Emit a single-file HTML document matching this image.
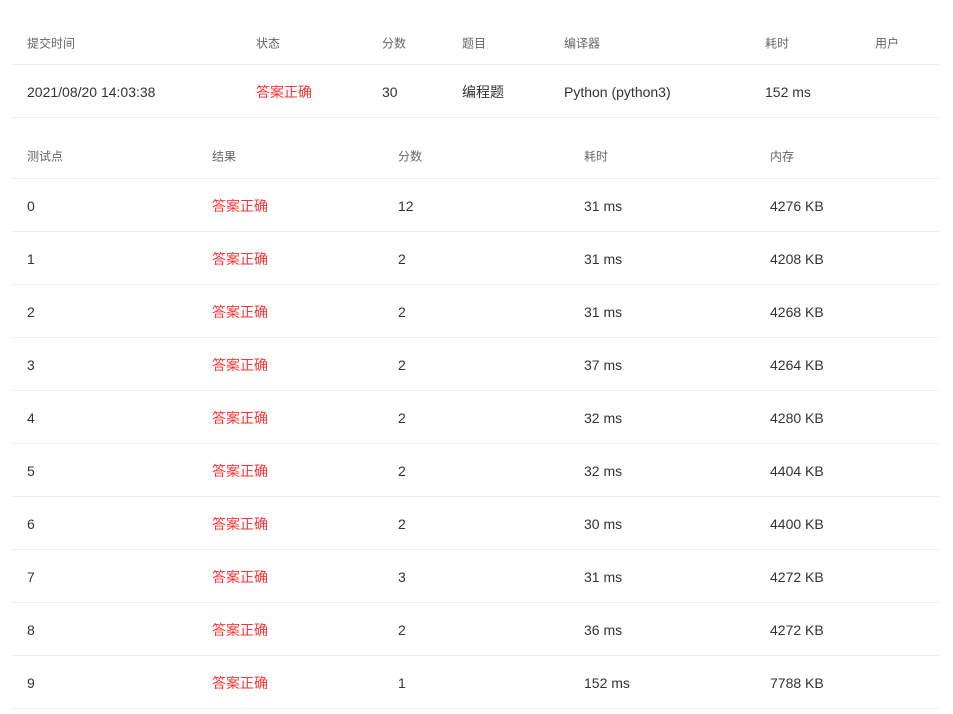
<!DOCTYPE html>
<html><head><meta charset="utf-8"><style>
body{margin:0;background:#fff;font-family:"Liberation Sans","Noto Sans CJK SC",sans-serif;}
.t{position:absolute;left:12px;width:927px;}
.r{position:relative;border-bottom:1px solid #ebeef5;box-sizing:border-box;}
.r span{position:absolute;top:50%;transform:translateY(-45%);white-space:nowrap;}
.h span{font-size:12px;color:#666;}
.d span{font-size:14px;color:#333;}
.red{color:#ff3333!important;}
</style></head><body>
<div class="t" style="top:20px">
<div class="r h" style="height:45px"><span style="left:15px">提交时间</span><span style="left:244px">状态</span><span style="left:370px">分数</span><span style="left:450px">题目</span><span style="left:552px">编译器</span><span style="left:753px">耗时</span><span style="left:863px">用户</span></div>
<div class="r d" style="height:53px"><span style="left:15px">2021/08/20 14:03:38</span><span class="red" style="left:244px">答案正确</span><span style="left:370px">30</span><span style="left:450px">编程题</span><span style="left:552px">Python (python3)</span><span style="left:753px">152 ms</span></div>
</div>
<div class="t" style="top:131px">
<div class="r h" style="height:48px"><span style="left:15px">测试点</span><span style="left:200px">结果</span><span style="left:386px">分数</span><span style="left:572px">耗时</span><span style="left:758px">内存</span></div>
<div class="r d" style="height:53px"><span style="left:15px">0</span><span class="red" style="left:200px">答案正确</span><span style="left:386px">12</span><span style="left:572px">31 ms</span><span style="left:758px">4276 KB</span></div>
<div class="r d" style="height:53px"><span style="left:15px">1</span><span class="red" style="left:200px">答案正确</span><span style="left:386px">2</span><span style="left:572px">31 ms</span><span style="left:758px">4208 KB</span></div>
<div class="r d" style="height:53px"><span style="left:15px">2</span><span class="red" style="left:200px">答案正确</span><span style="left:386px">2</span><span style="left:572px">31 ms</span><span style="left:758px">4268 KB</span></div>
<div class="r d" style="height:53px"><span style="left:15px">3</span><span class="red" style="left:200px">答案正确</span><span style="left:386px">2</span><span style="left:572px">37 ms</span><span style="left:758px">4264 KB</span></div>
<div class="r d" style="height:53px"><span style="left:15px">4</span><span class="red" style="left:200px">答案正确</span><span style="left:386px">2</span><span style="left:572px">32 ms</span><span style="left:758px">4280 KB</span></div>
<div class="r d" style="height:53px"><span style="left:15px">5</span><span class="red" style="left:200px">答案正确</span><span style="left:386px">2</span><span style="left:572px">32 ms</span><span style="left:758px">4404 KB</span></div>
<div class="r d" style="height:53px"><span style="left:15px">6</span><span class="red" style="left:200px">答案正确</span><span style="left:386px">2</span><span style="left:572px">30 ms</span><span style="left:758px">4400 KB</span></div>
<div class="r d" style="height:53px"><span style="left:15px">7</span><span class="red" style="left:200px">答案正确</span><span style="left:386px">3</span><span style="left:572px">31 ms</span><span style="left:758px">4272 KB</span></div>
<div class="r d" style="height:53px"><span style="left:15px">8</span><span class="red" style="left:200px">答案正确</span><span style="left:386px">2</span><span style="left:572px">36 ms</span><span style="left:758px">4272 KB</span></div>
<div class="r d" style="height:53px"><span style="left:15px">9</span><span class="red" style="left:200px">答案正确</span><span style="left:386px">1</span><span style="left:572px">152 ms</span><span style="left:758px">7788 KB</span></div>
</div>
</body></html>
